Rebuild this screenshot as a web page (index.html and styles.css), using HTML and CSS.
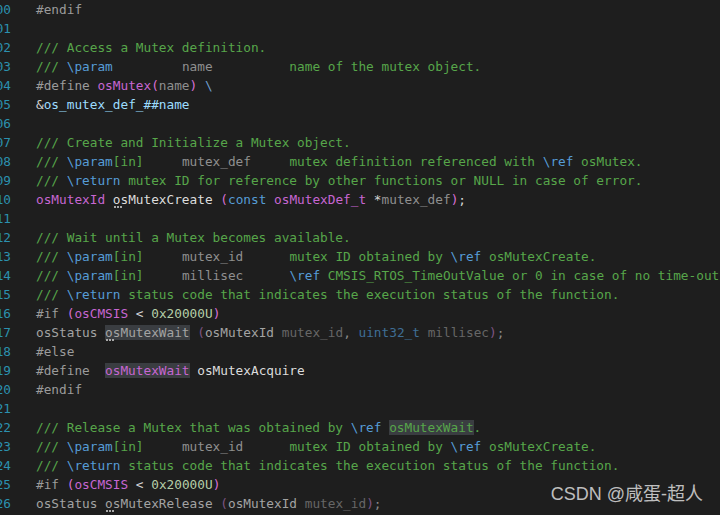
FILE: index.html
```html
<!DOCTYPE html>
<html>
<head>
<meta charset="utf-8">
<link rel="stylesheet" href="styles.css">
</head>
<body>
<div class="editor">
  <div class="row"><span class="ln"><span>300</span></span><span class="code"><span class="pp">#endif</span></span></div>
  <div class="row"><span class="ln"><span>301</span></span><span class="code"></span></div>
  <div class="row"><span class="ln"><span>302</span></span><span class="code"><span class="c">/// Access a Mutex definition.</span></span></div>
  <div class="row"><span class="ln"><span>303</span></span><span class="code"><span class="c">/// </span><span class="k">\param</span>         <span class="p">name</span>          <span class="c">name of the mutex object.</span></span></div>
  <div class="row"><span class="ln"><span>304</span></span><span class="code"><span class="pp">#define</span> <span class="m">osMutex</span><span class="br">(</span><span class="p">name</span><span class="br">)</span> <span class="bs">\</span></span></div>
  <div class="row"><span class="ln"><span>305</span></span><span class="code"><span class="t">&amp;</span><span class="v">os_mutex_def_##name</span></span></div>
  <div class="row"><span class="ln"><span>306</span></span><span class="code"></span></div>
  <div class="row"><span class="ln"><span>307</span></span><span class="code"><span class="c">/// Create and Initialize a Mutex object.</span></span></div>
  <div class="row"><span class="ln"><span>308</span></span><span class="code"><span class="c">/// </span><span class="k">\param</span><span class="c">[in]</span>     <span class="p">mutex_def</span>     <span class="c">mutex definition referenced with </span><span class="k">\ref</span><span class="c"> osMutex.</span></span></div>
  <div class="row"><span class="ln"><span>309</span></span><span class="code"><span class="c">/// </span><span class="k">\return</span><span class="c"> mutex ID for reference by other functions or NULL in case of error.</span></span></div>
  <div class="row"><span class="ln"><span>310</span></span><span class="code"><span class="m">osMutexId</span> <span class="fn hint">osMutexCreate</span> <span class="br">(</span><span class="k">const</span> <span class="m">osMutexDef_t</span> <span class="t">*</span><span class="p">mutex_def</span><span class="br">)</span><span class="t">;</span></span></div>
  <div class="row"><span class="ln"><span>311</span></span><span class="code"></span></div>
  <div class="row"><span class="ln"><span>312</span></span><span class="code"><span class="c">/// Wait until a Mutex becomes available.</span></span></div>
  <div class="row"><span class="ln"><span>313</span></span><span class="code"><span class="c">/// </span><span class="k">\param</span><span class="c">[in]</span>     <span class="p">mutex_id</span>      <span class="c">mutex ID obtained by </span><span class="k">\ref</span><span class="c"> osMutexCreate.</span></span></div>
  <div class="row"><span class="ln"><span>314</span></span><span class="code"><span class="c">/// </span><span class="k">\param</span><span class="c">[in]</span>     <span class="p">millisec</span>      <span class="k">\ref</span><span class="c"> CMSIS_RTOS_TimeOutValue or 0 in case of no time-out.</span></span></div>
  <div class="row"><span class="ln"><span>315</span></span><span class="code"><span class="c">/// </span><span class="k">\return</span><span class="c"> status code that indicates the execution status of the function.</span></span></div>
  <div class="row"><span class="ln"><span>316</span></span><span class="code"><span class="pp">#if</span> <span class="br">(</span><span class="m">osCMSIS</span> <span class="t">&lt;</span> <span class="n">0x20000U</span><span class="br">)</span></span></div>
  <div class="row"><span class="ln"><span>317</span></span><span class="code"><span class="d1">osStatus</span> <span class="d1 hl hint">osMutexWait</span> <span class="dbr">(</span><span class="d1">osMutexId</span> <span class="d2">mutex_id</span><span class="d3">,</span> <span class="dk">uint32_t</span> <span class="d2">millisec</span><span class="dbr">)</span><span class="d3">;</span></span></div>
  <div class="row"><span class="ln"><span>318</span></span><span class="code"><span class="pp">#else</span></span></div>
  <div class="row"><span class="ln"><span>319</span></span><span class="code"><span class="pp">#define</span>  <span class="m hl">osMutexWait</span> <span class="fn">osMutexAcquire</span></span></div>
  <div class="row"><span class="ln"><span>320</span></span><span class="code"><span class="pp">#endif</span></span></div>
  <div class="row"><span class="ln"><span>321</span></span><span class="code"></span></div>
  <div class="row"><span class="ln"><span>322</span></span><span class="code"><span class="c">/// Release a Mutex that was obtained by </span><span class="k">\ref</span> <span class="c hl">osMutexWait</span><span class="c">.</span></span></div>
  <div class="row"><span class="ln"><span>323</span></span><span class="code"><span class="c">/// </span><span class="k">\param</span><span class="c">[in]</span>     <span class="p">mutex_id</span>      <span class="c">mutex ID obtained by </span><span class="k">\ref</span><span class="c"> osMutexCreate.</span></span></div>
  <div class="row"><span class="ln"><span>324</span></span><span class="code"><span class="c">/// </span><span class="k">\return</span><span class="c"> status code that indicates the execution status of the function.</span></span></div>
  <div class="row"><span class="ln"><span>325</span></span><span class="code"><span class="pp">#if</span> <span class="br">(</span><span class="m">osCMSIS</span> <span class="t">&lt;</span> <span class="n">0x20000U</span><span class="br">)</span></span></div>
  <div class="row"><span class="ln"><span>326</span></span><span class="code"><span class="d1">osStatus</span> <span class="d1 hint">osMutexRelease</span> <span class="dbr">(</span><span class="d1">osMutexId</span> <span class="d2">mutex_id</span><span class="dbr">)</span><span class="d3">;</span></span></div>
</div>
<div class="watermark">CSDN @咸蛋-超人</div>
</body>
</html>
```
FILE: styles.css
```css
html, body {
  margin: 0;
  padding: 0;
  background: #1e1e1e;
  width: 720px;
  height: 515px;
  overflow: hidden;
}
.editor {
  display: flex;
  flex-direction: column;
  font-family: "DejaVu Sans Mono", "Liberation Mono", monospace;
  font-size: 12.75px;
  line-height: 19px;
  color: #d4d4d4;
}
.row {
  display: flex;
  height: 19px;
}
.ln {
  width: 11px;
  flex: none;
  overflow: hidden;
  display: flex;
  justify-content: flex-end;
  color: #2b91af;
}
.code {
  margin-left: 25px;
  white-space: pre;
}
.c { color: #57a64a; }
.k { color: #569cd6; }
.p { color: #8f8f8f; }
.pp { color: #9b9b9b; }
.m { color: #c766d2; }
.br { color: #da70d6; }
.bs { color: #6f9fcf; }
.t { color: #d4d4d4; }
.n { color: #b5cea8; }
.v { color: #9cdcfe; }
.fn { color: #dcdcdc; }
.d1 { color: #a3a3a3; }
.d2 { color: #666666; }
.d3 { color: #8a8a8a; }
.dk { color: #3f6e96; }
.dbr { color: #7e5584; }
.hl { background: #3a3d41; }
.hint { position: relative; }
.hint::after {
  content: "";
  position: absolute;
  left: 1px;
  bottom: -1px;
  width: 8px;
  height: 2px;
  background: repeating-linear-gradient(90deg, #a8a8a8 0 2px, transparent 2px 3px);
}
.watermark {
  position: absolute;
  right: 17px;
  top: 482px;
  font-family: "Liberation Sans", "Noto Sans CJK SC", sans-serif;
  font-size: 18px;
  line-height: 24px;
  color: rgba(255, 255, 255, 0.72);
}
```
